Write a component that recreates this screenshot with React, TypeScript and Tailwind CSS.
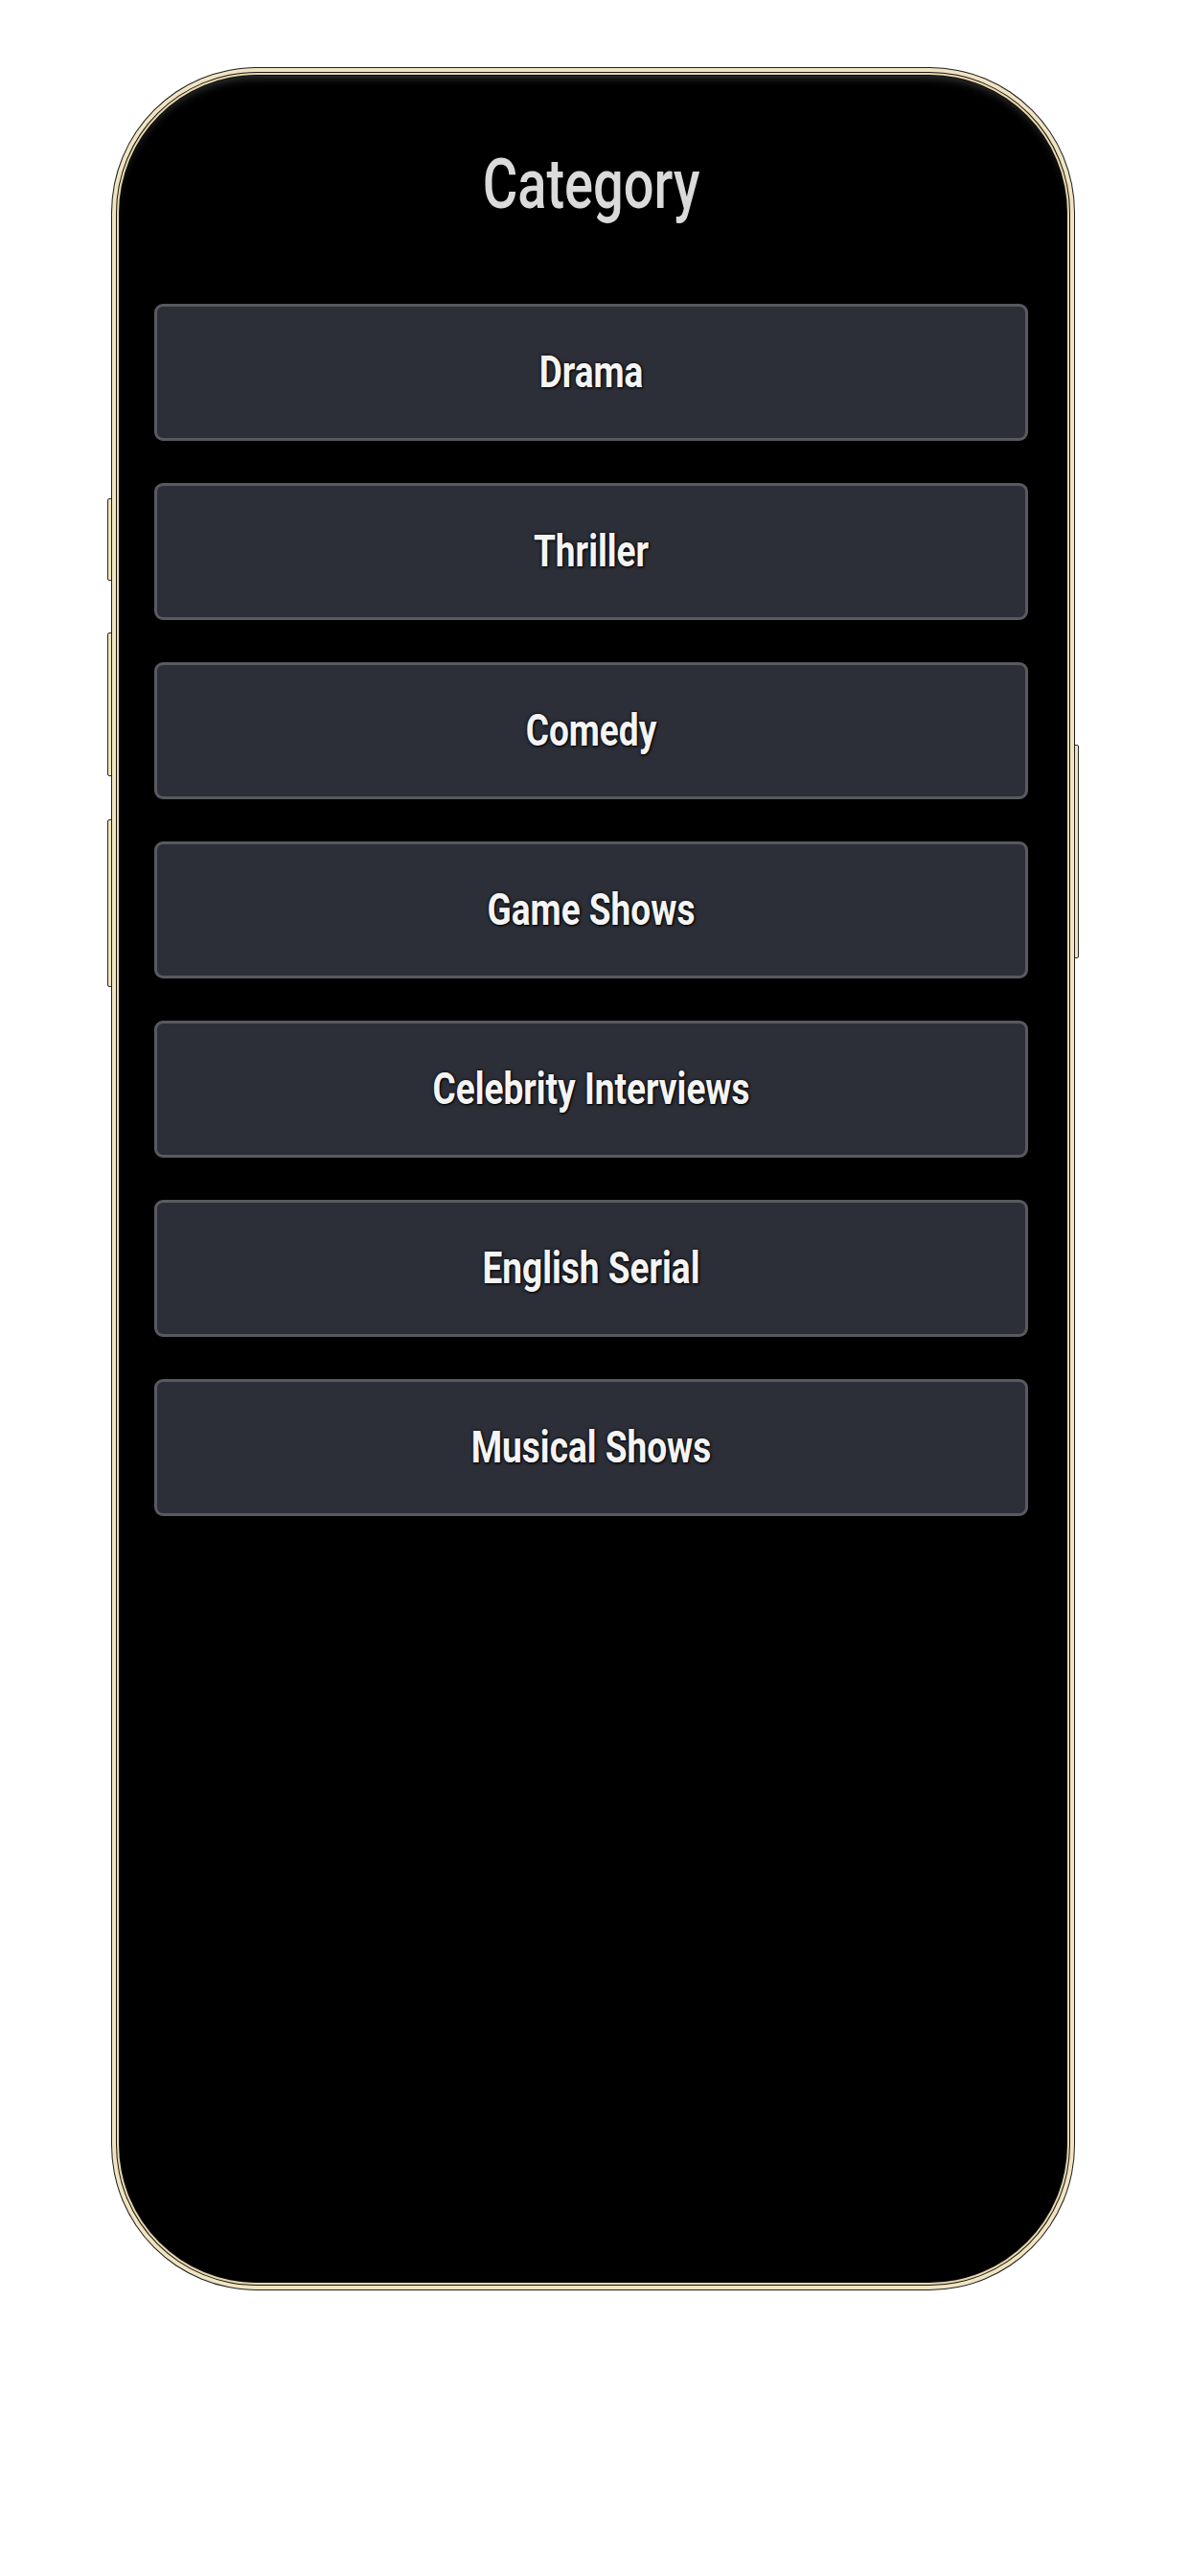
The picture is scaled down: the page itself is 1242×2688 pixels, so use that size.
import React from 'react';

const categories = [
  'Drama',
  'Thriller',
  'Comedy',
  'Game Shows',
  'Celebrity Interviews',
  'English Serial',
  'Musical Shows',
];

const SideButton: React.FC<{ className: string }> = ({ className }) => (
  <div className={`absolute w-[6px] rounded-[2px] border border-[#2a2a2a] bg-[#efe2bf] ${className}`} />
);

const App: React.FC = () => {
  return (
    <div className="min-h-[2688px] w-full bg-white pl-[116px] pt-[70px] font-['Roboto',sans-serif]">
      <div className="relative w-[1006px]">
        {/* Side buttons */}
        <SideButton className="-left-[4px] top-[450px] h-[86px]" />
        <SideButton className="-left-[4px] top-[590px] h-[150px]" />
        <SideButton className="-left-[4px] top-[785px] h-[175px]" />
        <SideButton className="-right-[4px] top-[707px] h-[223px]" />

        {/* Phone frame */}
        <div className="relative rounded-[152px] bg-[#1e1e1e] p-px">
          <div className="rounded-[151px] bg-[#f1e4c2] p-[4px]">
            <div className="rounded-[147px] bg-[#1a1813] p-px">
              <div className="rounded-[146px] bg-[#e6d7b0] p-[2px]">
                <div className="rounded-[144px] bg-[#0d0d0d] p-px">
                  <div className="flex h-[2302px] flex-col rounded-[143px] bg-black pl-[36px] pr-[40px] pt-[85px] shadow-[inset_0_8px_10px_-6px_#3a3a3a]">
                    <h1 className="scale-y-[1.3] text-center text-[56px] leading-none font-medium text-[#dadada]">
                      Category
                    </h1>

                    <div className="mt-[97px] flex flex-col gap-[44px]">
                      {categories.map((c) => (
                        <button
                          key={c}
                          className="flex h-[143px] w-full items-center justify-center rounded-[9px] border-[3px] border-[#595a60] bg-[#2d2f38]"
                        >
                          <span className="scale-y-[1.25] text-[37px] leading-none font-bold text-[#f4f4f4] [text-shadow:0_0_3px_#000,1px_1px_2px_#000]">
                            {c}
                          </span>
                        </button>
                      ))}
                    </div>
                  </div>
                </div>
              </div>
            </div>
          </div>
        </div>
      </div>
    </div>
  );
};

export default App;
